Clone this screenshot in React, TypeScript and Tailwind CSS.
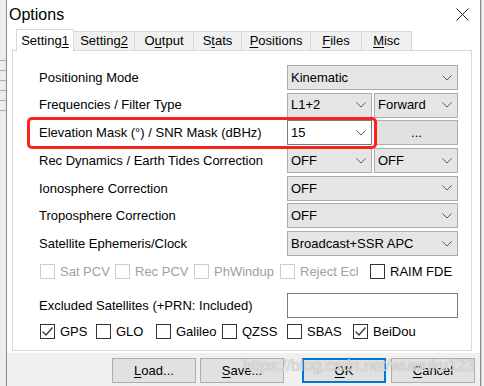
import React from "react";

function Chevron() {
  return (
    <svg width="10" height="6" viewBox="0 0 10 6" className="shrink-0">
      <path d="M0.5 0.5 L5 5 L9.5 0.5" fill="none" stroke="#5a5a5a" strokeWidth="1" />
    </svg>
  );
}

function Combo({ value, className = "", white = false }: { value: string; className?: string; white?: boolean }) {
  return (
    <div
      className={`h-[25px] flex items-center justify-between pl-[3px] pr-[5px] border ${
        white ? "bg-white border-[#7a7a7a]" : "bg-[#e5e5e5] border-[#adadad]"
      } ${className}`}
    >
      <span>{value}</span>
      <Chevron />
    </div>
  );
}

function Box({ checked = false, disabled = false }: { checked?: boolean; disabled?: boolean }) {
  return (
    <span
      className={`w-[15px] h-[15px] shrink-0 border bg-white flex items-center justify-center ${
        disabled ? "border-[#cccccc]" : "border-[#333333]"
      }`}
    >
      {checked && (
        <svg width="13" height="13" viewBox="0 0 13 13">
          <path d="M1.5 6.5 L5 10 L11.5 2.5" fill="none" stroke="#333" strokeWidth="1.2" />
        </svg>
      )}
    </span>
  );
}

function Check({ label, w, checked, disabled }: { label: string; w: string; checked?: boolean; disabled?: boolean }) {
  return (
    <div className={`flex items-center gap-[5px] ${w}`}>
      <Box checked={checked} disabled={disabled} />
      <span className={disabled ? "text-[#a0a0a0]" : "text-black"}>{label}</span>
    </div>
  );
}

function Row({ label, children }: { label: string; children: React.ReactNode }) {
  return (
    <div className="flex items-center h-[25px]">
      <div className="w-[274px] pl-[26px] whitespace-nowrap">{label}</div>
      <div className="w-[171px] flex gap-[2px]">{children}</div>
    </div>
  );
}

const tabs = [
  { pre: "Setting", key: "2", post: "", w: "w-[62px]" },
  { pre: "O", key: "u", post: "tput", w: "w-[60px]" },
  { pre: "S", key: "t", post: "ats", w: "w-[49px]" },
  { pre: "", key: "P", post: "ositions", w: "w-[70px]" },
  { pre: "", key: "F", post: "iles", w: "w-[52px]" },
  { pre: "", key: "M", post: "isc", w: "w-[51px]" },
];

function Btn({ pre, k, post, className = "", focus = false }: { pre: string; k: string; post: string; className?: string; focus?: boolean }) {
  return (
    <div
      className={`w-[84px] h-[25px] flex items-center justify-center bg-[#e1e1e1] ${
        focus ? "border-2 border-[#0078d7]" : "border border-[#adadad]"
      } ${className}`}
    >
      {pre}
      <span className="underline underline-offset-2">{k}</span>
      {post}
    </div>
  );
}

export default function App() {
  return (
    <div className="w-[484px] h-[386px] flex overflow-hidden bg-[#f0f0f0] text-[13px] text-black font-['Liberation_Sans',Arial,sans-serif]">
      {/* window behind */}
      <div className="w-[6px] shrink-0 bg-[#ededed] flex flex-col gap-[9px] pt-[60px]">
        <div className="h-px bg-[#b0b0b0]" />
        <div className="h-px bg-[#b0b0b0]" />
        <div className="h-px bg-[#b0b0b0]" />
        <div className="h-px bg-[#b0b0b0]" />
        <div className="h-px bg-[#b0b0b0]" />
        <div className="h-px bg-[#b0b0b0]" />
      </div>

      {/* dialog */}
      <div className="w-[475px] shrink-0 flex flex-col border-l border-r border-[#8a8a8a] bg-white relative">
        {/* title bar */}
        <div className="h-[29px] flex items-center justify-between pl-[2px] pr-[11px]">
          <span className="text-[16px]">Options</span>
          <svg width="13" height="13" viewBox="0 0 13 13">
            <path d="M0.5 0.5 L12.5 12.5 M12.5 0.5 L0.5 12.5" stroke="#222" strokeWidth="1" />
          </svg>
        </div>

        {/* body */}
        <div className="flex-1 flex flex-col">
          <div className="h-[21px] flex items-end pl-[9px]">
            <div className="w-[58px] h-[22px] -mb-px relative z-10 bg-white border border-b-0 border-[#d9d9d9] flex items-center justify-center">
              Setting<span className="underline underline-offset-2">1</span>
            </div>
            {tabs.map((t) => (
              <div
                key={t.pre + t.key}
                className={`${t.w} h-[19px] -ml-px bg-[#f0f0f0] border border-b-0 border-[#d9d9d9] flex items-center justify-center`}
              >
                {t.pre}
                <span className="underline underline-offset-2">{t.key}</span>
                {t.post}
              </div>
            ))}
          </div>

          <div className="ml-[5px] w-[460px] h-[301px] border border-[#d9d9d9] bg-white relative pt-[14px]">
            <div className="flex flex-col gap-[2.7px]">
              <Row label="Positioning Mode">
                <Combo value="Kinematic" className="w-[171px]" />
              </Row>
              <Row label="Frequencies / Filter Type">
                <Combo value="L1+2" className="w-[85px]" />
                <Combo value="Forward" className="w-[84px]" />
              </Row>
              <Row label="Elevation Mask (°) / SNR Mask (dBHz)">
                <Combo value="15" white className="w-[85px]" />
                <div className="w-[83px] h-[25px] ml-px bg-[#e1e1e1] border border-[#adadad] flex items-center justify-center">
                  ...
                </div>
              </Row>
              <Row label="Rec Dynamics / Earth Tides Correction">
                <Combo value="OFF" className="w-[85px]" />
                <Combo value="OFF" className="w-[84px]" />
              </Row>
              <Row label="Ionosphere Correction">
                <Combo value="OFF" className="w-[171px]" />
              </Row>
              <Row label="Troposphere Correction">
                <Combo value="OFF" className="w-[171px]" />
              </Row>
              <Row label="Satellite Ephemeris/Clock">
                <Combo value="Broadcast+SSR APC" className="w-[171px]" />
              </Row>
            </div>

            <div className="flex items-center h-[15px] mt-[8px] pl-[27px]">
              <Check label="Sat PCV" w="w-[75px]" disabled />
              <Check label="Rec PCV" w="w-[79px]" disabled />
              <Check label="PhWindup" w="w-[86px]" disabled />
              <Check label="Reject Ecl" w="w-[90px]" disabled />
              <Check label="RAIM FDE" w="w-[90px]" />
            </div>

            <div className="flex items-center h-[25px] mt-[14px]">
              <div className="w-[274px] pl-[26px] whitespace-nowrap">Excluded Satellites (+PRN: Included)</div>
              <div className="w-[171px] h-[25px] border border-[#7a7a7a] bg-white" />
            </div>

            <div className="flex items-center h-[15px] mt-[6px] pl-[27px]">
              <Check label="GPS" w="w-[56px]" checked />
              <Check label="GLO" w="w-[60px]" />
              <Check label="Galileo" w="w-[66px]" />
              <Check label="QZSS" w="w-[65px]" />
              <Check label="SBAS" w="w-[66px]" />
              <Check label="BeiDou" w="w-[80px]" checked />
            </div>

            {/* red annotation */}
            <div className="absolute left-[14px] top-[66px] w-[350px] h-[32px] border-[3px] border-[#ff1f1f] rounded-[5px]" />
          </div>
        </div>

        {/* button bar */}
        <div className="h-[33px] bg-[#f0f0f0] flex items-start pt-[5px] pl-[105px]">
          <Btn pre="" k="L" post="oad..." />
          <Btn pre="" k="S" post="ave..." className="ml-[4px]" />
          <Btn pre="" k="O" post="K" focus className="ml-[18px] w-[83px]" />
          <Btn pre="" k="C" post="ancel" className="ml-[5px] w-[83px]" />
        </div>

        {/* watermark */}
        <div className="absolute left-[236px] top-[354px] text-[16px] text-white/70 [text-shadow:0_0_1px_#888] whitespace-nowrap pointer-events-none">
          https://blog.csdn.net/wuwuku123
        </div>
      </div>

      <div className="flex-1 bg-[#f3f3f3] border-l border-[#cfcfcf]" />
    </div>
  );
}
